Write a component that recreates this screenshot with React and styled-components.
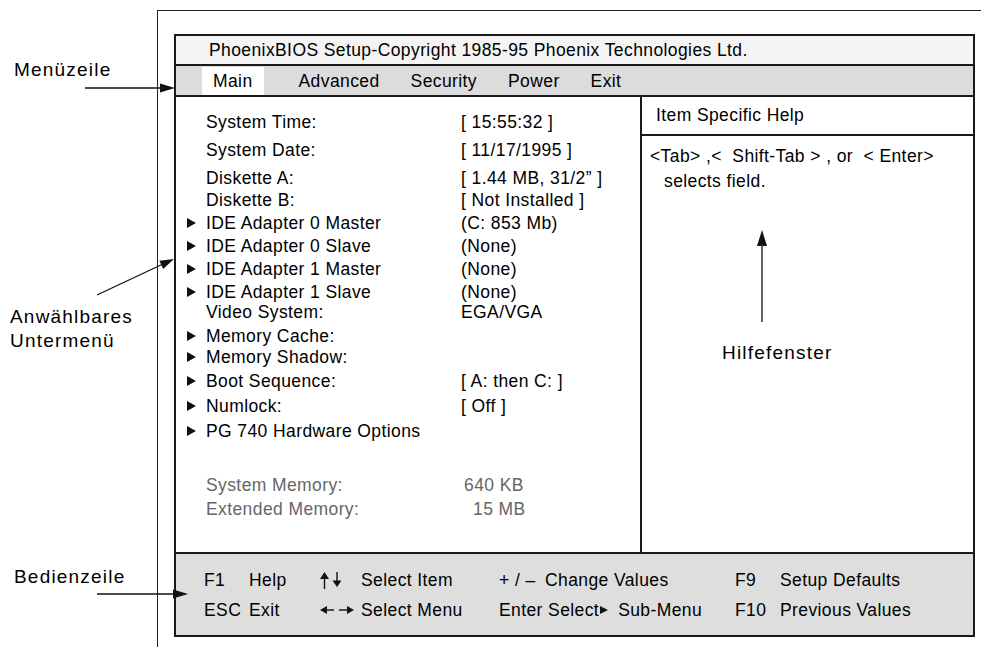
import styled, { createGlobalStyle } from "styled-components";

const GlobalStyle = createGlobalStyle`
  html, body {
    margin: 0;
    padding: 0;
    background: #fff;
  }
  body {
    font-family: "Liberation Sans", Arial, Helvetica, sans-serif;
    color: #000;
  }
`;

const Page = styled.div`
  position: relative;
  display: flex;
  width: 981px;
  height: 647px;
  overflow: hidden;
  font-size: 17.5px;
  letter-spacing: 0.4px;
`;

const Legend = styled.div`
  width: 157px;
  flex-shrink: 0;
  display: flex;
  flex-direction: column;
`;

const LegendLabel = styled.div`
  font-size: 19px;
  letter-spacing: 1.2px;
  line-height: 24px;
  padding-left: ${(p) => p.$indent}px;
  margin-top: ${(p) => p.$top}px;
`;

const Callouts = styled.svg`
  position: absolute;
  top: 0;
  left: 0;
  pointer-events: none;
`;

const Frame = styled.div`
  flex: 1;
  margin-top: 10px;
  border-top: 1px solid #222;
  border-left: 1px solid #222;
  padding: 23px 0 0 16px;
`;

const Bios = styled.div`
  box-sizing: border-box;
  width: 801px;
  height: 603px;
  border: 2px solid #1a1a1a;
  display: flex;
  flex-direction: column;
`;

const TitleBar = styled.div`
  height: 28px;
  flex-shrink: 0;
  display: flex;
  align-items: center;
  padding-left: 33px;
  background: #f4f4f4;
  border-bottom: 2px solid #1a1a1a;
`;

const MenuBar = styled.div`
  height: 28px;
  padding-top: 1px;
  flex-shrink: 0;
  display: flex;
  gap: 9px;
  padding-left: 26px;
  background: #dcdcdc;
  border-bottom: 2px solid #1a1a1a;
`;

const MenuItem = styled.div`
  display: flex;
  align-items: center;
  padding: 0 11px;
  background: ${(p) => (p.$active ? "#fff" : "transparent")};
  margin-right: ${(p) => (p.$active ? 15 : 0)}px;
`;

const Body = styled.div`
  flex: 1;
  display: flex;
  min-height: 0;
`;

const Fields = styled.div`
  width: 464px;
  flex-shrink: 0;
  border-right: 2px solid #1a1a1a;
  padding-top: 15px;
  display: flex;
  flex-direction: column;
`;

const Row = styled.div`
  display: grid;
  grid-template-columns: 30px 255px auto;
  align-items: center;
  height: 20px;
  line-height: 20px;
  margin-top: ${(p) => p.$gap || 0}px;
  color: ${(p) => (p.$dim ? "#666" : "#000")};
  white-space: nowrap;
`;

const MarkerCell = styled.span`
  display: flex;
  align-items: center;
  height: 20px;
`;

const Marker = styled.span`
  display: block;
  margin-left: 11px;
  width: 0;
  height: 0;
  border-left: 9px solid #111;
  border-top: 5px solid transparent;
  border-bottom: 5px solid transparent;
`;

const Value = styled.span`
  padding-left: ${(p) => p.$indent || 0}px;
`;

const Help = styled.div`
  flex: 1;
  display: flex;
  flex-direction: column;
`;

const HelpHeader = styled.div`
  height: 37px;
  display: flex;
  align-items: center;
  padding-left: 14px;
  border-bottom: 2px solid #1a1a1a;
`;

const HelpText = styled.div`
  padding: 8px 0 0 8px;
  line-height: 25px;
  white-space: pre;
`;

const HelpLine = styled.div`
  padding-left: ${(p) => p.$indent || 0}px;
`;

const HelpNote = styled.div`
  display: flex;
  flex-direction: column;
  margin-top: 36px;
`;

const UpArrow = styled.svg`
  margin-left: 113px;
`;

const NoteLabel = styled.div`
  margin-top: 21px;
  padding-left: 80px;
  line-height: 20px;
  font-size: 19px;
  letter-spacing: 1.2px;
`;

const KeyBar = styled.div`
  height: 83px;
  flex-shrink: 0;
  box-sizing: border-box;
  border-top: 2px solid #1a1a1a;
  background: #dedede;
  padding: 16px 0 0 28px;
  display: grid;
  grid-template-columns: 45px 71px 41px 138px 46px 190px 45px auto;
  grid-auto-rows: 20px;
  row-gap: 10px;
  line-height: 20px;
  white-space: nowrap;
`;

const Key = styled.span`
  display: flex;
  align-items: center;
  grid-column: ${(p) => p.$span || "auto"};
`;

const SubMarker = styled.span`
  display: inline-block;
  margin: 0 10px 0 1px;
  width: 0;
  height: 0;
  border-left: 8px solid #111;
  border-top: 4px solid transparent;
  border-bottom: 4px solid transparent;
`;

const fields = [
  { label: "System Time:", value: "[ 15:55:32 ]", gap: 0 },
  { label: "System Date:", value: "[ 11/17/1995 ]", gap: 8 },
  { label: "Diskette A:", value: "[ 1.44 MB, 31/2\u201D ]", gap: 8 },
  { label: "Diskette B:", value: "[ Not Installed ]", gap: 2 },
  { label: "IDE Adapter 0 Master", value: "(C: 853 Mb)", gap: 3, sub: true },
  { label: "IDE Adapter 0 Slave", value: "(None)", gap: 3, sub: true },
  { label: "IDE Adapter 1 Master", value: "(None)", gap: 3, sub: true },
  { label: "IDE Adapter 1 Slave", value: "(None)", gap: 3, sub: true },
  { label: "Video System:", value: "EGA/VGA", gap: 0 },
  { label: "Memory Cache:", value: "", gap: 4, sub: true },
  { label: "Memory Shadow:", value: "", gap: 1, sub: true },
  { label: "Boot Sequence:", value: "[ A: then C: ]", gap: 4, sub: true },
  { label: "Numlock:", value: "[ Off ]", gap: 5, sub: true },
  { label: "PG 740 Hardware Options", value: "", gap: 5, sub: true },
  { label: "System Memory:", value: "640 KB", gap: 34, dim: true, indent: 3 },
  { label: "Extended Memory:", value: "15 MB", gap: 4, dim: true, indent: 12 },
];

const menu = ["Main", "Advanced", "Security", "Power", "Exit"];

function UpDownIcon() {
  return (
    <svg width="24" height="18" viewBox="0 0 24 18">
      <polygon points="0,8 4.5,1 9,8" fill="#111" />
      <line x1="4.5" y1="7" x2="4.5" y2="18" stroke="#111" strokeWidth="1.4" />
      <line x1="17" y1="1" x2="17" y2="11" stroke="#111" strokeWidth="1.4" />
      <polygon points="12.5,9.5 17,16 21.5,9.5" fill="#111" />
    </svg>
  );
}

function LeftRightIcon() {
  return (
    <svg width="34" height="10" viewBox="0 0 34 10">
      <polygon points="0,5 7,1 7,9" fill="#111" />
      <line x1="6" y1="5" x2="14" y2="5" stroke="#111" strokeWidth="1.4" />
      <line x1="19" y1="5" x2="28" y2="5" stroke="#111" strokeWidth="1.4" />
      <polygon points="27,1 34,5 27,9" fill="#111" />
    </svg>
  );
}

export default function App() {
  return (
    <>
      <GlobalStyle />
      <Page>
        <Legend>
          <LegendLabel $indent={14} $top={58}>Menüzeile</LegendLabel>
          <LegendLabel $indent={10} $top={223}>Anwählbares</LegendLabel>
          <LegendLabel $indent={10} $top={0}>Untermenü</LegendLabel>
          <LegendLabel $indent={14} $top={212}>Bedienzeile</LegendLabel>
        </Legend>

        <Frame>
          <Bios>
            <TitleBar>PhoenixBIOS Setup-Copyright 1985-95 Phoenix Technologies Ltd.</TitleBar>
            <MenuBar>
              {menu.map((m, i) => (
                <MenuItem key={m} $active={i === 0}>{m}</MenuItem>
              ))}
            </MenuBar>
            <Body>
              <Fields>
                {fields.map((f) => (
                  <Row key={f.label} $gap={f.gap} $dim={f.dim}>
                    <MarkerCell>{f.sub && <Marker />}</MarkerCell>
                    <span>{f.label}</span>
                    <Value $indent={f.indent}>{f.value}</Value>
                  </Row>
                ))}
              </Fields>
              <Help>
                <HelpHeader>Item Specific Help</HelpHeader>
                <HelpText>
                  <HelpLine>{"<Tab> ,<  Shift-Tab > , or  < Enter>"}</HelpLine>
                  <HelpLine $indent={14}>selects field.</HelpLine>
                </HelpText>
                <HelpNote>
                  <UpArrow width="14" height="92" viewBox="0 0 14 92">
                    <polygon points="7,0 2,16 12,16" fill="#111" />
                    <line x1="7" y1="14" x2="7" y2="92" stroke="#333" strokeWidth="1.5" />
                  </UpArrow>
                  <NoteLabel>Hilfefenster</NoteLabel>
                </HelpNote>
              </Help>
            </Body>
            <KeyBar>
              <Key>F1</Key>
              <Key>Help</Key>
              <Key><UpDownIcon /></Key>
              <Key>Select Item</Key>
              <Key>+ / –</Key>
              <Key>Change Values</Key>
              <Key>F9</Key>
              <Key>Setup Defaults</Key>

              <Key>ESC</Key>
              <Key>Exit</Key>
              <Key><LeftRightIcon /></Key>
              <Key>Select Menu</Key>
              <Key $span="span 2">Enter Select<SubMarker />Sub-Menu</Key>
              <Key>F10</Key>
              <Key>Previous Values</Key>
            </KeyBar>
          </Bios>
        </Frame>

        <Callouts width="981" height="647" viewBox="0 0 981 647">
          <line x1="85" y1="88" x2="163" y2="88" stroke="#111" strokeWidth="1.3" />
          <polygon points="160,83.5 175,88 160,92.5" fill="#111" />
          <line x1="97" y1="295" x2="163" y2="264" stroke="#111" strokeWidth="1.3" />
          <polygon points="159.4,260.8 163.2,269 174,259" fill="#111" />
          <line x1="97" y1="594" x2="175" y2="594" stroke="#111" strokeWidth="1.3" />
          <polygon points="173,589.5 188,594 173,598.5" fill="#111" />
        </Callouts>
      </Page>
    </>
  );
}
